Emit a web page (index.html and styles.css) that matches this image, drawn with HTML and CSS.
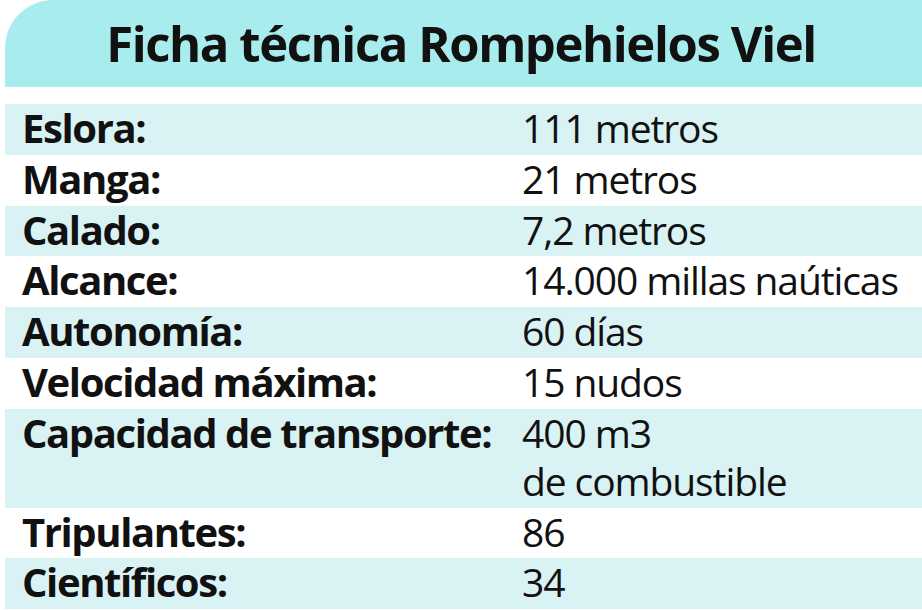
FILE: index.html
```html
<!DOCTYPE html>
<html lang="es">
<head>
<meta charset="utf-8">
<title>Ficha técnica Rompehielos Viel</title>
<link rel="stylesheet" href="styles.css">
</head>
<body>
<div class="card">
  <h1 class="title">Ficha técnica Rompehielos Viel</h1>
  <div class="table">
    <div class="row shade"><div class="label">Eslora:</div><div class="value">111 metros</div></div>
    <div class="row"><div class="label">Manga:</div><div class="value">21 metros</div></div>
    <div class="row shade"><div class="label">Calado:</div><div class="value">7,2 metros</div></div>
    <div class="row"><div class="label">Alcance:</div><div class="value">14.000 millas naúticas</div></div>
    <div class="row shade"><div class="label">Autonomía:</div><div class="value">60 días</div></div>
    <div class="row"><div class="label">Velocidad máxima:</div><div class="value">15 nudos</div></div>
    <div class="row shade"><div class="label">Capacidad de transporte:</div><div class="value">400 m3<br>de combustible</div></div>
    <div class="row"><div class="label">Tripulantes:</div><div class="value">86</div></div>
    <div class="row shade"><div class="label">Científicos:</div><div class="value">34</div></div>
  </div>
</div>
</body>
</html>
```
FILE: styles.css
```css
html, body {
  margin: 0;
  padding: 0;
  background: #ffffff;
}
body {
  width: 922px;
  height: 610px;
  overflow: hidden;
  font-family: "Open Sans", "Noto Sans", sans-serif;
  color: #111111;
}
.card {
  display: flex;
  flex-direction: column;
  padding-left: 5px;
}
.title {
  margin: 0;
  height: 87px;
  background: #a9ecee;
  border-top-left-radius: 48px;
  display: flex;
  align-items: center;
  justify-content: center;
  font-size: 49px;
  font-weight: 700;
  letter-spacing: -1.4px;
  padding-right: 5px;
  padding-bottom: 2px;
  box-sizing: border-box;
}
.table {
  margin-top: 17px;
  display: flex;
  flex-direction: column;
}
.row {
  display: grid;
  grid-template-columns: 517px 1fr;
  line-height: 48px;
  padding-bottom: 2.8px;
}
.row.shade {
  background: #d9f2f4;
}
.label {
  padding-left: 17px;
  font-size: 40px;
  font-weight: 700;
  letter-spacing: -1.4px;
}
.value {
  font-size: 39px;
  font-weight: 400;
  letter-spacing: -1.1px;
}
```
